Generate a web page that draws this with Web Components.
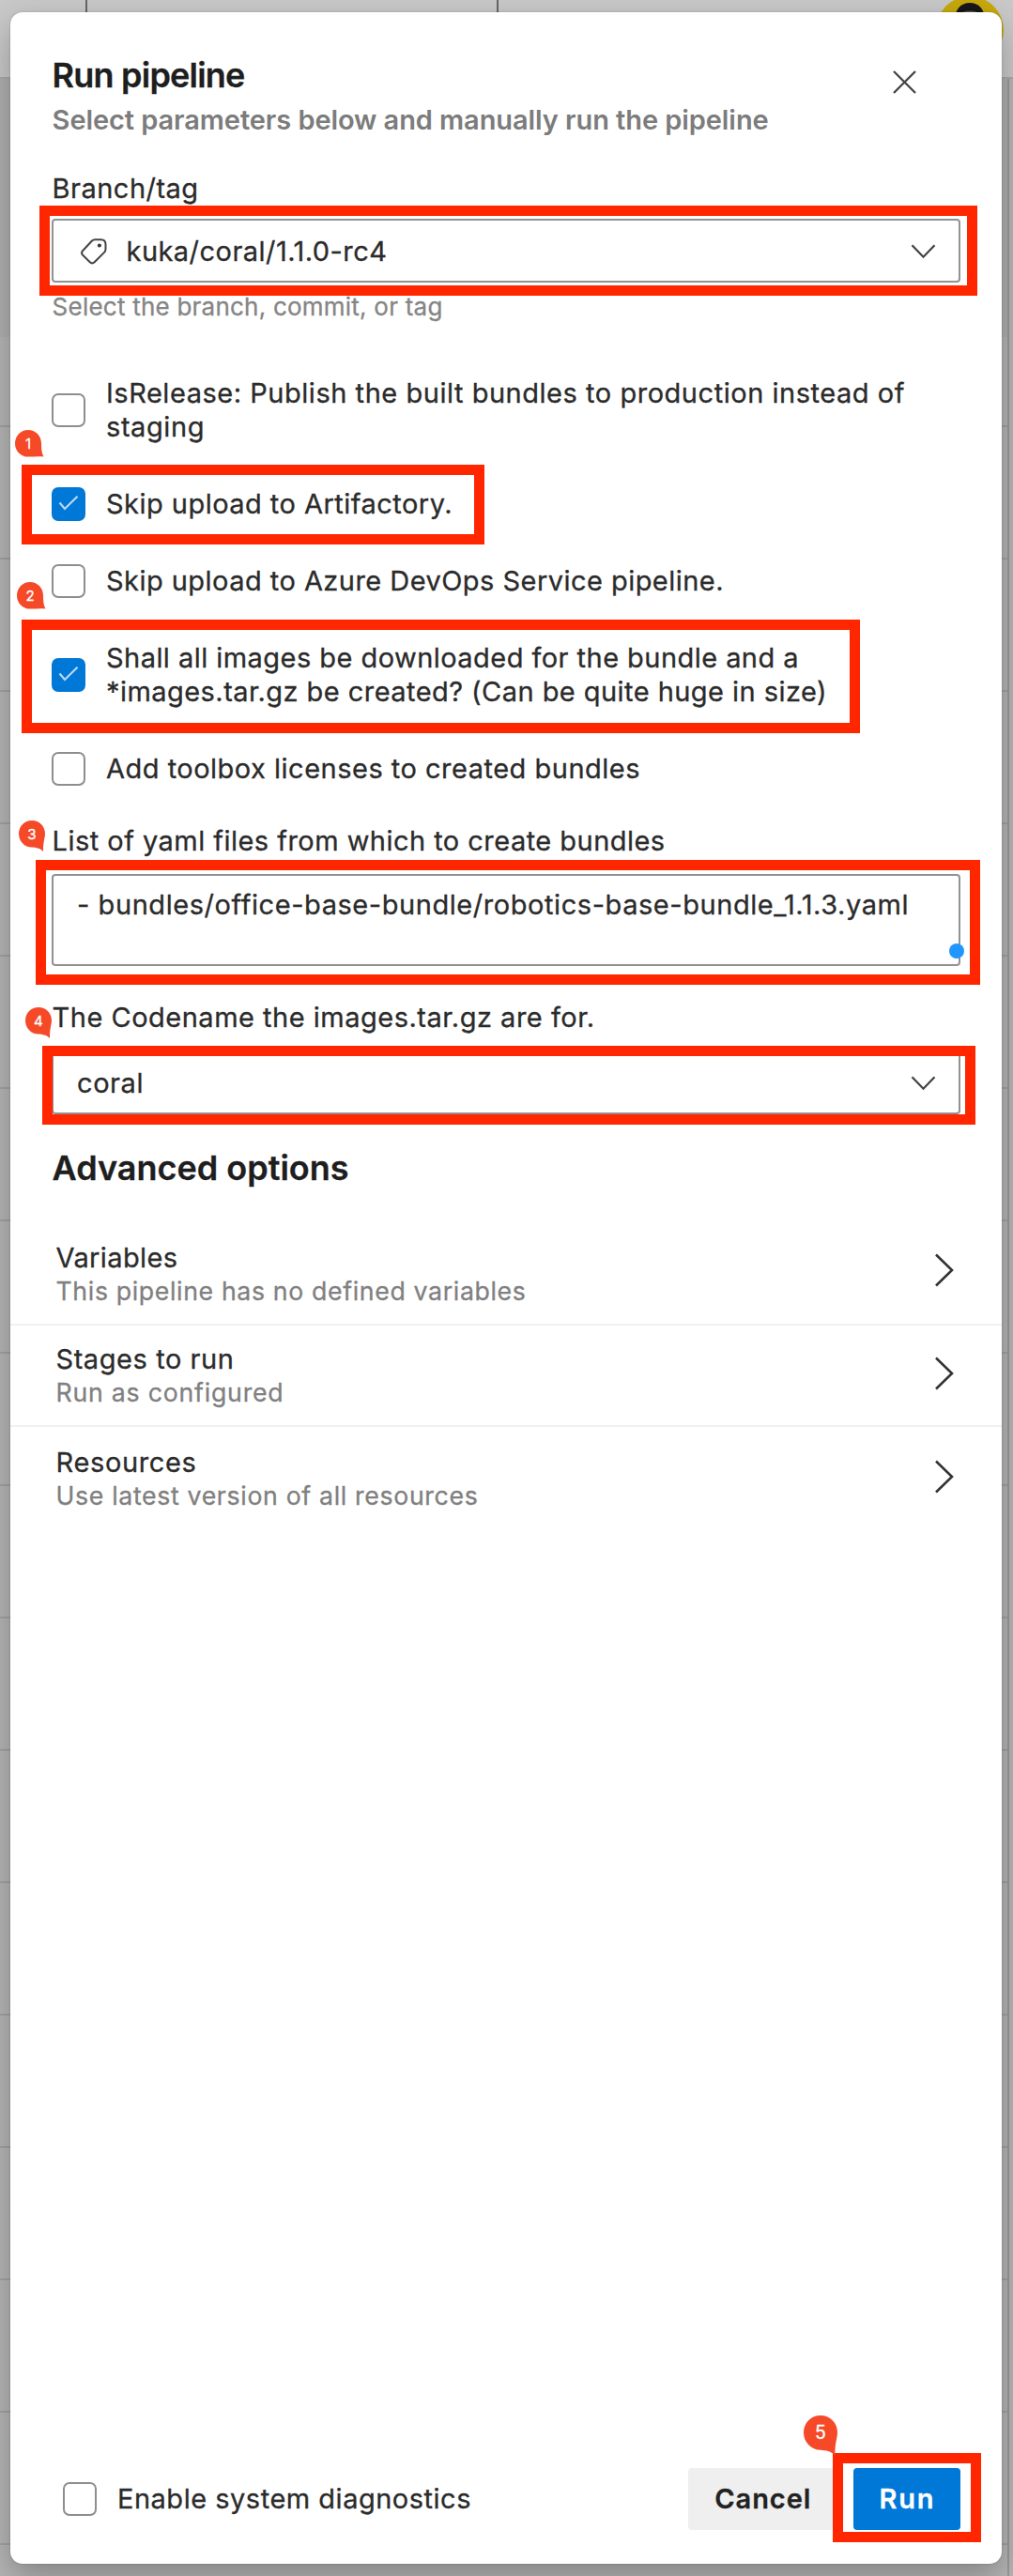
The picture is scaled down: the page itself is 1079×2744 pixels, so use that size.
<!DOCTYPE html>
<html lang="en">
<head>
<meta charset="utf-8">
<title>Run pipeline</title>
<style>
  html, body { margin: 0; padding: 0; }
  body { width: 1079px; height: 2744px; overflow: hidden; font-family: Inter, "Liberation Sans", sans-serif; -webkit-text-stroke: .3px currentColor; color: #2b2b2b; }
</style>
</head>
<body>
<pipeline-page></pipeline-page>
<script>
class BaseElement extends HTMLElement {
  connectedCallback() {
    if (this.shadowRoot) return;
    this.attachShadow({ mode: 'open' }).innerHTML = this.render();
    this.ready();
  }
  ready() {}
  attr(name, fallback = '') { return this.getAttribute(name) ?? fallback; }
}

/* One line of text, tracked so that it spans the given width. */
customElements.define('text-line', class extends BaseElement {
  render() {
    return `<style>
      :host { display: block; white-space: nowrap; }
      span { display: inline-block; }
    </style><span><slot></slot></span>`;
  }
  ready() {
    const target = Number(this.attr('span', 0));
    if (!target) return;
    const span = this.shadowRoot.querySelector('span');
    const natural = span.getBoundingClientRect().width;
    span.style.letterSpacing = ((target - natural) / this.textContent.length).toFixed(3) + 'px';
  }
});

customElements.define('chevron-icon', class extends BaseElement {
  render() {
    return this.attr('dir') === 'right'
      ? `<style>:host{display:block;flex:none;height:36px}svg{display:block}</style>
         <svg width="22" height="36" viewBox="0 0 22 36" fill="none" stroke="#333" stroke-width="2.6"><path d="M2 1.5 19 18 2 34.5"/></svg>`
      : `<style>:host{display:block;flex:none;height:18px}svg{display:block}</style>
         <svg width="27" height="18" viewBox="0 0 27 18" fill="none" stroke="#444" stroke-width="2.3"><path d="M1.5 2.3 13.5 14.7 25.5 2.3"/></svg>`;
  }
});

customElements.define('check-option', class extends BaseElement {
  render() {
    const on = this.hasAttribute('checked');
    return `<style>
      :host { display: flex; align-items: center; gap: 22px; font-size: 29px; line-height: 36px; }
      i { box-sizing: border-box; flex: none; width: 36px; height: 36px; border-radius: 7px;
          border: 2px solid #8e8e8e; background: #fff; }
      i.on { border-color: #0078d7; background: #0078d7; }
      svg { display: block; }
    </style>
    <i class="${on ? 'on' : ''}">${on ? '<svg width="32" height="32" viewBox="0 0 32 32" fill="none" stroke="#b8d9f4" stroke-width="2.2"><path d="M6.5 14.5 12 21 25.5 7.8"/></svg>' : ''}</i>
    <div><slot></slot></div>`;
  }
});

customElements.define('select-box', class extends BaseElement {
  render() {
    const tag = this.hasAttribute('tag')
      ? `<svg width="30" height="30" viewBox="0 0 30 30" fill="none" stroke="#444" stroke-width="2">
           <path d="M16.2 2.2h6.3q5 0 5 5v5.2q0 2-1.5 3.5L15.6 26.3q-2.4 2.3-4.8 0L3.2 18.8q-2.3-2.4 0-4.8L12.7 3.7q1.5-1.5 3.5-1.5Z"/>
           <circle cx="20.9" cy="8.6" r="2" fill="#333" stroke="none"/></svg>` : '';
    return `<style>
      :host { box-sizing: border-box; display: flex; align-items: center; height: 68px; border: 2px solid #929292;
              border-radius: 4px; padding: 2.5px 24px 0 25px; font-size: 29px; line-height: 36px; }
      :host([tag]) { padding-left: 28px; }
      .value { flex: 1; } svg { flex: none; margin-right: 19.5px; }
    </style>${tag}<div class="value"><slot></slot></div><chevron-icon></chevron-icon>`;
  }
});

customElements.define('text-area', class extends BaseElement {
  render() {
    return `<style>
      :host { box-sizing: border-box; display: block; height: 98.5px; border: 2px solid #929292; border-radius: 4px;
              padding: 13.5px 25px; font-size: 29px; line-height: 36px; }
    </style><slot></slot>`;
  }
});

customElements.define('form-field', class extends BaseElement {
  render() {
    return `<style>
      :host { display: flex; flex-direction: column; font-size: 29px; line-height: 36px; }
      .label { padding-left: .6px; }
      .box { margin-top: var(--field-gap, 15px); }
      .hint { margin-top: 10px; padding-left: .6px; font-size: 26px; line-height: 32px; color: #858585; }
    </style><div class="label"><slot name="label"></slot></div><div class="box"><slot></slot></div><div class="hint"><slot name="hint"></slot></div>`;
  }
});

customElements.define('nav-row', class extends BaseElement {
  render() {
    return `<style>
      :host { box-sizing: border-box; display: flex; align-items: flex-start; justify-content: space-between;
              height: var(--row-height, 108px); padding: var(--row-top, 20px) 50.5px 0 48.5px; border-bottom: 2px solid #f1f1f1; }
      :host([last]) { border-bottom: 0; }
      .title { font-size: 29px; line-height: 36px; }
      .sub { font-size: 26.7px; line-height: 32px; margin-top: var(--sub-gap, 1px); color: #808080; }
      chevron-icon { margin-top: var(--arrow-top, 12px); }
    </style>
    <div><div class="title"><slot name="title"></slot></div><div class="sub"><slot></slot></div></div>
    <chevron-icon dir="right"></chevron-icon>`;
  }
});

customElements.define('action-button', class extends BaseElement {
  render() {
    return `<style>
      :host { box-sizing: border-box; display: flex; align-items: center; justify-content: center; height: 66px;
              width: 158px; padding-left: 1.5px; border-radius: 4px; background: #efefef; color: #222; font-weight: 600; font-size: 29px; line-height: 36px; }
      :host([primary]) { width: 114px; background: #0078d7; color: #fff; }
    </style><slot></slot>`;
  }
});

/* Red outline drawn over the controls it points out. */
customElements.define('mark-frame', class extends BaseElement {
  render() {
    const [x, y, r, b] = this.attr('box').split(' ').map(Number);
    return `<style>:host { box-sizing: border-box; position: absolute; border: 11px solid #ff2600;
      left: ${x}px; top: ${y}px; width: ${r - x}px; height: ${b - y}px; }</style>`;
  }
});

/* Numbered balloon whose tail points at an outline. */
customElements.define('mark-badge', class extends BaseElement {
  render() {
    const [x, y, size] = this.attr('at').split(' ').map(Number);
    const tail = this.attr('tail') === 'down'
      ? 'M14 0C21.8 0 28 6 28 14C28 18.5 25.8 23 26 33C22.5 29.5 18.5 29 14 28.6C6.2 28.6 0 22 0 14.2C0 6 6.2 0 14 0Z'
      : 'M14 0C21.8 0 28 6.2 28 14.2C28 20 28.3 24.5 30.5 28.6C26 27.7 20 28.6 14 28.6C6.2 28.6 0 22.4 0 14.4C0 6.2 6.2 0 14 0Z';
    return `<style>
      :host { position: absolute; left: ${x}px; top: ${y}px; }
      svg { display: block; overflow: visible; }
      b { position: absolute; left: 0; top: 0; width: ${size}px; height: ${size * 1.04}px; line-height: ${size * 1.04}px;
          text-align: center; color: #fff; font-weight: 400; font-size: ${size * .54}px; }
    </style>
    <svg width="${size}" height="${size}" viewBox="0 0 28 28"><path d="${tail}" fill="#f54927"/></svg><b><slot></slot></b>`;
  }
});

/* Dimmed page that shows around the panel. */
customElements.define('page-backdrop', class extends BaseElement {
  render() {
    const rows = '<p></p>'.repeat(17);
    return `<style>
      :host { position: absolute; inset: 0; display: flex; flex-direction: column; background: #b6b6b6; overflow: hidden; }
      header { box-sizing: border-box; flex: none; height: 84px; background: #c9c9c9; border-bottom: 2px solid #aaa;
               display: flex; padding-left: 91px; gap: 436px; }
      header i { width: 2px; height: 40px; background: #666; }
      svg { position: absolute; left: 997px; top: -4px; }
      main { border-right: 2px solid #999; margin-right: 4px; flex: 1; background: #b6b6b6; }
      section { height: 275px; background: #b0b0b0; }
      p { box-sizing: border-box; margin: 0; height: 141px; border-bottom: 2px solid #a3a3a3; }
      p:first-of-type { height: 96px; }
    </style>
    <header><i></i><i></i></header>
    <svg width="72" height="72" viewBox="0 0 72 72"><circle cx="36" cy="36" r="36" fill="#c8a90c"/>
      <ellipse cx="36" cy="21" rx="15" ry="14" fill="#171717"/><ellipse cx="36" cy="20" rx="10" ry="4.5" fill="#555"/></svg>
    <main><section></section>${rows}</main>`;
  }
});

customElements.define('run-panel', class extends BaseElement {
  render() {
    return `<style>
      :host { box-sizing: border-box; position: relative; display: flex; flex-direction: column; width: 1056px; height: 2718px;
              background: #fff; border-radius: 13px; padding-top: 45px;
              box-shadow: 0 0 2px rgba(0,0,0,.25), 0 14px 36px rgba(0,0,0,.28); }
      .pad { padding: 0 44px; }
      .head { display: flex; justify-content: space-between; padding-right: 90px; }
      h1, h2 { margin: 0; padding-left: .6px; font-size: 36px; line-height: 44px; font-weight: 600; color: #1e1e1e; }
      .lead { margin-top: 8px; padding-left: .6px; font-size: 29px; line-height: 36px; font-weight: 600; color: #7c7c7c; -webkit-text-stroke: 0; }
      .close { display: block; margin-top: 15.5px; }
      .checks { display: flex; flex-direction: column; gap: 46px; margin: 58px 0 41px; }
      .branch { display: block; margin-top: 36.5px; --field-gap: 14.5px; }
      .yaml { --field-gap: 16.7px; }
      .code { margin-top: 27px; --field-gap: 16.5px; }
      h2 { margin-top: 25px; }
      nav { margin-top: 37px; }
      footer { margin-top: auto; margin-bottom: 36px; display: flex; justify-content: space-between; align-items: center; padding: 0 44.3px 0 56px; }
      .actions { display: flex; gap: 17.7px; }
    </style>
    <div class="pad head">
      <div><h1><text-line span="205">Run pipeline</text-line></h1>
      <div class="lead"><text-line span="763">Select parameters below and manually run the pipeline</text-line></div></div>
      <svg class="close" width="27" height="27" viewBox="0 0 27 27" fill="none" stroke="#444" stroke-width="2.3"><path d="M2 2 25 25M25 2 2 25"/></svg>
    </div>
    <div class="pad">
      <form-field class="branch">
        <text-line slot="label" span="156">Branch/tag</text-line>
        <select-box tag><text-line span="278">kuka/coral/1.1.0-rc4</text-line></select-box>
        <text-line slot="hint" span="416">Select the branch, commit, or tag</text-line>
      </form-field>
      <div class="checks">
        <check-option><text-line span="851">IsRelease: Publish the built bundles to production instead of</text-line><text-line span="105">staging</text-line></check-option>
        <check-option checked><text-line span="369">Skip upload to Artifactory.</text-line></check-option>
        <check-option><text-line span="658">Skip upload to Azure DevOps Service pipeline.</text-line></check-option>
        <check-option checked><text-line span="738">Shall all images be downloaded for the bundle and a</text-line><text-line span="768">*images.tar.gz be created? (Can be quite huge in size)</text-line></check-option>
        <check-option><text-line span="569">Add toolbox licenses to created bundles</text-line></check-option>
      </div>
      <form-field class="yaml">
        <text-line slot="label" span="653">List of yaml files from which to create bundles</text-line>
        <text-area><text-line span="886">- bundles/office-base-bundle/robotics-base-bundle_1.1.3.yaml</text-line></text-area>
      </form-field>
      <form-field class="code">
        <text-line slot="label" span="578">The Codename the images.tar.gz are for.</text-line>
        <select-box><text-line span="71">coral</text-line></select-box>
      </form-field>
      <h2><text-line span="316">Advanced options</text-line></h2>
    </div>
    <nav>
      <nav-row style="--row-height:109.5px;--row-top:19.5px;--arrow-top:12.5px;--sub-gap:.5px"><text-line slot="title" span="130">Variables</text-line><text-line span="501">This pipeline has no defined variables</text-line></nav-row>
      <nav-row style="--row-top:18px;--arrow-top:15px"><text-line slot="title" span="190">Stages to run</text-line><text-line span="243">Run as configured</text-line></nav-row>
      <nav-row last style="--row-top:20px;--arrow-top:15px"><text-line slot="title" span="150">Resources</text-line><text-line span="450">Use latest version of all resources</text-line></nav-row>
    </nav>
    <footer>
      <check-option><text-line span="377">Enable system diagnostics</text-line></check-option>
      <div class="actions">
        <action-button><text-line span="103">Cancel</text-line></action-button>
        <action-button primary><text-line span="60">Run</text-line></action-button>
      </div>
    </footer>`;
  }
});

customElements.define('pipeline-page', class extends BaseElement {
  render() {
    return `<style>
      :host { position: relative; display: block; box-sizing: border-box; width: 1079px; height: 2744px; padding: 13px 12px 13px 11px; overflow: hidden; }
      .dot { position: absolute; left: 1011px; top: 1005px; width: 16px; height: 16px; border-radius: 50%; background: #2196ff; }
    </style>
    <page-backdrop></page-backdrop>
    <run-panel></run-panel>
    <mark-frame box="42 218.5 1041 315"></mark-frame>
    <mark-frame box="22.5 495 515.5 580"></mark-frame>
    <mark-frame box="22.5 660 916 781"></mark-frame>
    <mark-frame box="38 916 1043.5 1048.5"></mark-frame>
    <mark-frame box="44.5 1114 1039 1198"></mark-frame>
    <mark-frame box="887.3 2613 1045 2708"></mark-frame>
    <span class="dot"></span>
    <mark-badge at="16 457.7 28">1</mark-badge>
    <mark-badge at="18 619.7 28">2</mark-badge>
    <mark-badge at="20 874 28" tail="down">3</mark-badge>
    <mark-badge at="26.8 1073 28" tail="down">4</mark-badge>
    <mark-badge at="856 2573 36" tail="down">5</mark-badge>`;
  }
});
</script>
</body>
</html>
